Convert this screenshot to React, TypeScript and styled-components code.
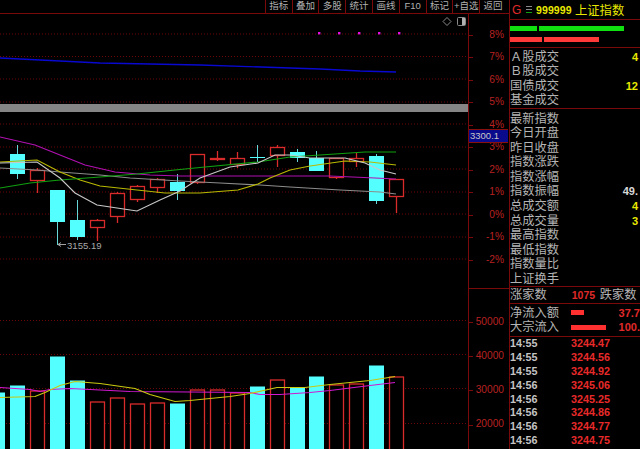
import React from 'react';
import styled, { createGlobalStyle } from 'styled-components';

// DATA
const digits = '"Liberation Sans", "Noto Sans CJK SC", sans-serif';
const red = '#d92b2b';
const cyan = '#54ffff';
const rule = '#7a0a0a';

const toolbarItems = ['指标', '叠加', '多股', '统计', '画线', 'F10', '标记', '+自选', '返回'];
const priceLabels = ['8%', '7%', '6%', '5%', '4%', '3%', '2%', '1%', '0%', '-1%', '-2%'];
const volumeLabels = ['50000', '40000', '30000', '20000'];
const priceGrid = [34, 56.5, 79, 102, 124, 147, 169, 192, 214, 237, 259];
const volumeGrid = [32, 66, 100, 135];

// x, open top, body bottom, wick top, wick bottom, up = red hollow
const candles = [
    { x: 10, top: 154, bottom: 174, hi: 145, lo: 179, up: false },
    { x: 30, top: 170, bottom: 180, hi: 168, lo: 193, up: true },
    { x: 50, top: 190, bottom: 222, hi: 190, lo: 245, up: false },
    { x: 70, top: 220, bottom: 237, hi: 200, lo: 240, up: false },
    { x: 90, top: 220, bottom: 227, hi: 219, lo: 241, up: true },
    { x: 110, top: 193, bottom: 216, hi: 192, lo: 223, up: true },
    { x: 130, top: 186, bottom: 199, hi: 185, lo: 202, up: true },
    { x: 150, top: 179, bottom: 187, hi: 178, lo: 193, up: true },
    { x: 170, top: 182, bottom: 191, hi: 174, lo: 200, up: false },
    { x: 190, top: 154, bottom: 182, hi: 154, lo: 184, up: true },
    { x: 210, top: 158, bottom: 159, hi: 151, lo: 161, up: true },
    { x: 230, top: 158, bottom: 164, hi: 152, lo: 168, up: true },
    { x: 250, top: 157, bottom: 158, hi: 145, lo: 162, up: false },
    { x: 270, top: 147, bottom: 155, hi: 145, lo: 167, up: true },
    { x: 290, top: 152, bottom: 158, hi: 149, lo: 162, up: false },
    { x: 309, top: 158, bottom: 171, hi: 151, lo: 171, up: false },
    { x: 329, top: 158, bottom: 177, hi: 158, lo: 179, up: true },
    { x: 349, top: 158, bottom: 161, hi: 153, lo: 167, up: true },
    { x: 369, top: 156, bottom: 201, hi: 154, lo: 204, up: false },
    { x: 389, top: 179, bottom: 196, hi: 179, lo: 213, up: true },
];

const volumes = [
    { x: -10, top: 393, up: false },
    { x: 10, top: 386, up: false },
    { x: 30, top: 391, up: true },
    { x: 50, top: 357, up: false },
    { x: 70, top: 381, up: false },
    { x: 90, top: 402, up: true },
    { x: 110, top: 398, up: true },
    { x: 130, top: 404, up: true },
    { x: 150, top: 403, up: true },
    { x: 170, top: 404, up: false },
    { x: 190, top: 390, up: true },
    { x: 210, top: 390, up: true },
    { x: 230, top: 393, up: true },
    { x: 250, top: 387, up: false },
    { x: 270, top: 380, up: true },
    { x: 290, top: 388, up: false },
    { x: 309, top: 377, up: false },
    { x: 329, top: 385, up: true },
    { x: 349, top: 384, up: true },
    { x: 369, top: 366, up: false },
    { x: 389, top: 377, up: true },
];

const blueLine = '0,58 40,60 100,63 200,65 320,69 360,71 396,72';
const magentaLine = '0,137 35,145 60,155 85,165 115,172 150,175 180,176 210,176 260,176 330,176 375,178 396,179';
const grayLine = '0,168 37,170 60,172 100,175 130,178 180,181 220,183 260,185 290,187 340,190 380,192 396,194';
const whiteLine = '0,163 37,162 60,178 75,193 97,205 137,211 160,200 180,191 200,178 230,167 258,163 275,155 290,155 310,158 345,158 365,163 380,170 396,174';
const yellowLine = '0,162 37,160 60,172 80,180 100,186 137,190 165,193 200,193 238,190 258,184 270,178 290,170 310,166 345,161 370,162 396,165';
const greenLine = '0,188 30,183 60,180 100,177 137,174 175,170 205,167 258,162 290,157 320,155 365,152 396,152';
const volYellow = '0,109 35,108 45,104 60,97 75,93 100,95 135,100 150,106 175,113 190,112 230,108 250,105 277,99 305,99 330,96 370,92 395,88';
const volMagenta = '0,99 30,101 40,103 50,101 70,100 90,101 130,103 250,104 260,106 280,106 310,104 330,102 370,97 395,94';

const quoteRows = [
    { label: 'Ａ股成交', value: '4' },
    { label: 'Ｂ股成交', value: '' },
    { label: '国债成交', value: '12' },
    { label: '基金成交', value: '' },
];
const indexRows = [
    { label: '最新指数', value: '', tone: '' },
    { label: '今日开盘', value: '', tone: '' },
    { label: '昨日收盘', value: '', tone: '' },
    { label: '指数涨跌', value: '', tone: '' },
    { label: '指数涨幅', value: '', tone: '' },
    { label: '指数振幅', value: '49.', tone: '#d8d8d8' },
    { label: '总成交额', value: '4', tone: '#e8e800' },
    { label: '总成交量', value: '3', tone: '#e8e800' },
    { label: '最高指数', value: '', tone: '' },
    { label: '最低指数', value: '', tone: '' },
    { label: '指数量比', value: '', tone: '' },
    { label: '上证换手', value: '', tone: '' },
];
const flowRows = [
    { label: '净流入额', width: 13, value: '37.7' },
    { label: '大宗流入', width: 35, value: '100.' },
];
const ticks = [
    ['14:55', '3244.47'],
    ['14:55', '3244.56'],
    ['14:55', '3244.92'],
    ['14:56', '3245.06'],
    ['14:56', '3245.25'],
    ['14:56', '3244.86'],
    ['14:56', '3244.77'],
    ['14:56', '3244.75'],
];

// STYLES
const GlobalStyle = createGlobalStyle`
    html, body {
        margin: 0;
        background: #000;
    }
`;

const Terminal = styled.div`
    display: flex;
    width: 640px;
    height: 449px;
    overflow: hidden;
    background: #000;
    font-family: ${digits};
`;

const Workspace = styled.div`
    display: flex;
    flex-direction: column;
    width: 509px;
    flex: none;
`;

const Toolbar = styled.div`
    display: flex;
    justify-content: flex-end;
    height: 13px;
    padding-right: 3px;
    border-bottom: 1px solid ${rule};
`;

const ToolButton = styled.div`
    width: 26.8px;
    border-left: 1px solid ${rule};
    box-sizing: border-box;
    color: #b0b0b0;
    font-size: 9.5px;
    line-height: 12px;
    text-align: center;
    white-space: nowrap;
`;

const ChartRow = styled.div<{ $height: number }>`
    display: flex;
    height: ${({ $height }) => $height}px;
    flex: none;
    position: relative;
`;

const Plot = styled.svg`
    display: block;
    flex: none;
    width: 468px;
    height: 100%;
`;

const PriceAxis = styled.div`
    flex: 1;
    padding-top: 9.5px;
    border-left: 1px solid ${rule};
`;

const AxisLabel = styled.div<{ $gap: number }>`
    position: relative;
    height: ${({ $gap }) => $gap}px;
    line-height: ${({ $gap }) => $gap}px;
    padding-right: 5px;
    color: #b82222;
    font-size: 10.2px;
    text-align: right;

    &::before {
        content: '';
        position: absolute;
        left: 0;
        top: 50%;
        width: 4px;
        height: 1px;
        background: ${rule};
    }
`;

const VolumeAxis = styled(PriceAxis)`
    padding-top: 15.5px;
    border-top: 1px solid ${rule};
`;

const PriceBadge = styled.div`
    position: absolute;
    left: 469px;
    top: 115px;
    width: 38px;
    height: 12px;
    background: #0a0a8c;
    border-top: 1px solid #8a1010;
    border-bottom: 1px solid #8a1010;
    color: #c8c8c8;
    font-size: 9.5px;
    line-height: 12px;
    padding-left: 1px;
`;

const Sidebar = styled.aside`
    display: flex;
    flex-direction: column;
    flex: 1;
    min-width: 0;
    border-left: 1px solid ${rule};
`;

const Header = styled.header`
    display: flex;
    align-items: center;
    height: 19px;
    flex: none;
    padding-left: 2px;
    border-bottom: 1px solid ${rule};
    color: #e8e800;
    font-size: 12.3px;
    white-space: nowrap;
`;

const MarketLetter = styled.span`
    width: 14px;
    color: #e02a2a;
    font-size: 12px;
`;

const Code = styled.span`
    width: 39px;
    margin-left: 4px;
    font-size: 10.5px;
    font-weight: 700;
    letter-spacing: 0.1px;
`;

const Meter = styled.div`
    display: flex;
    flex-direction: column;
    gap: 6px;
    height: 28px;
    flex: none;
    padding-top: 6px;
    box-sizing: border-box;
    border-bottom: 1px solid ${rule};
`;

const MeterRow = styled.div`
    display: flex;
    gap: 2px;
`;

const MeterBar = styled.div<{ $color: string; $width: number }>`
    width: ${({ $width }) => $width}px;
    height: 5px;
    background: ${({ $color }) => $color};
`;

const Section = styled.section<{ $height: number; $inset?: number }>`
    height: ${({ $height }) => $height}px;
    flex: none;
    box-sizing: border-box;
    padding-top: ${({ $inset }) => $inset || 0}px;
    border-bottom: 1px solid ${rule};
`;

const Row = styled.div<{ $height: number }>`
    display: flex;
    justify-content: space-between;
    height: ${({ $height }) => $height}px;
    line-height: ${({ $height }) => $height}px;
    color: #b4b4b4;
    font-size: 12.25px;
    white-space: nowrap;
`;

const RowValue = styled.span<{ $tone?: string }>`
    padding-right: 2px;
    color: ${({ $tone }) => $tone || '#e8e800'};
    font-size: 11px;
    font-weight: 700;
`;

const BreadthCount = styled.span`
    width: 28px;
    margin-left: 25px;
    color: #e02a2a;
    font-size: 10.5px;
    font-weight: 700;
`;

const BreadthRow = styled(Row)`
    justify-content: flex-start;
`;

const FlowBar = styled.div<{ $width: number }>`
    width: ${({ $width }) => $width}px;
    height: 5px;
    background: #ff3030;
    margin-left: 12px;
    align-self: center;
`;

const FlowValue = styled.span`
    margin-left: auto;
    color: #e02a2a;
    font-size: 11px;
    font-weight: 700;
`;

const TickList = styled.div`
    display: flex;
    flex-direction: column;
`;

const TickRow = styled.div`
    display: grid;
    grid-template-columns: 61px 1fr;
    height: 13.9px;
    line-height: 13.9px;
    font-size: 10.8px;
    font-weight: 700;
`;

const TickTime = styled.span`
    color: #c4c4c4;
`;

const TickPrice = styled.span`
    color: #e82a2a;
`;

// COMPONENTS
const Grid = ({ ys }: { ys: number[] }) => (
    <g stroke="#6a0606" strokeDasharray="1 2">
        {ys.map((y) => (
            <line key={y} x1="0" x2="468" y1={y} y2={y} />
        ))}
    </g>
);

const Trend = ({ points, color, width = 1 }: { points: string; color: string; width?: number }) => (
    <polyline points={points} fill="none" stroke={color} strokeWidth={width} />
);

const PricePanel = () => (
    <Plot viewBox="0 14 468 274">
        <Grid ys={priceGrid} />
        <rect x="0" y="104" width="468" height="8" fill="#858585" />
        {[319, 339, 359, 379, 399].map((x) => (
            <rect key={x} x={x - 1} y="32" width="2.4" height="2.4" fill="#e010e0" />
        ))}
        <path d="M447 17.5 L451 21.5 L447 25.5 L443 21.5 Z" fill="none" stroke="#8a8a8a" />
        <rect x="457.5" y="17.5" width="8" height="8" rx="1" fill="none" stroke="#8a8a8a" />
        <rect x="462" y="18" width="3" height="7" fill="#b0b0b0" />
        <Trend points={blueLine} color="#0808d0" width={1.4} />
        {candles.map((c) => (
            <g key={c.x} stroke={c.up ? red : '#66d8d8'} strokeWidth={c.up ? 1.3 : 1}>
                <line x1={c.x + 7.5} x2={c.x + 7.5} y1={c.hi} y2={c.lo} />
                {c.up ? (
                    <rect x={c.x + 0.5} y={c.top + 0.5} width="14" height={c.bottom - c.top} fill="#000" />
                ) : (
                    <rect x={c.x} y={c.top} width="15" height={c.bottom - c.top} fill={cyan} stroke="none" />
                )}
            </g>
        ))}
        <Trend points={magentaLine} color="#b010b0" width={1.2} />
        <Trend points={grayLine} color="#8c8c8c" width={1.2} />
        <Trend points={yellowLine} color="#b8b800" width={1.2} />
        <Trend points={greenLine} color="#10a010" width={1.2} />
        <Trend points={whiteLine} color="#c8c8c8" width={1.1} />
        <path d="M58 244.5 H66 M58 244.5 L61 242.5 M58 244.5 L61 246.5" stroke="#a0a0a0" fill="none" />
        <text x="67" y="249" fill="#a8a8a8" fontFamily={digits} fontSize="9.6">
            3155.19
        </text>
    </Plot>
);

const VolumePanel = () => (
    <Plot viewBox="0 0 468 160">
        <Grid ys={volumeGrid} />
        {volumes.map((v) =>
            v.up ? (
                <rect key={v.x} x={v.x + 0.5} y={v.top - 289 + 0.5} width="14" height="200" fill="#000" stroke={red} strokeWidth="1.3" />
            ) : (
                <rect key={v.x} x={v.x} y={v.top - 289} width="15" height="200" fill={cyan} />
            ),
        )}
        <Trend points={volMagenta} color="#d018d0" width={1.2} />
        <Trend points={volYellow} color="#c8c810" width={1.2} />
    </Plot>
);

const App = (): JSX.Element => (
    <Terminal>
        <GlobalStyle />
        <Workspace>
            <Toolbar>
                {toolbarItems.map((item) => (
                    <ToolButton key={item}>{item}</ToolButton>
                ))}
            </Toolbar>
            <ChartRow $height={274}>
                <PricePanel />
                <PriceAxis>
                    {priceLabels.map((label) => (
                        <AxisLabel key={label} $gap={22.5}>
                            {label}
                        </AxisLabel>
                    ))}
                </PriceAxis>
                <PriceBadge>3300.1</PriceBadge>
            </ChartRow>
            <ChartRow $height={161}>
                <VolumePanel />
                <VolumeAxis>
                    {volumeLabels.map((label) => (
                        <AxisLabel key={label} $gap={34.3}>
                            {label}
                        </AxisLabel>
                    ))}
                </VolumeAxis>
            </ChartRow>
        </Workspace>
        <Sidebar>
            <Header>
                <MarketLetter>G</MarketLetter>
                <svg width="6" height="7" viewBox="0 0 6 7">
                    <path d="M0 .5H6M0 3.5H6" stroke="#8a8a8a" />
                    <path d="M0 6.5H6" stroke="#10a010" />
                </svg>
                <Code>999999</Code>
                上证指数
            </Header>
            <Meter>
                <MeterRow>
                    <MeterBar $color="#10e010" $width={27} />
                    <MeterBar $color="#10e010" $width={85} />
                </MeterRow>
                <MeterRow>
                    <MeterBar $color="#ff3838" $width={32} />
                    <MeterBar $color="#ff3838" $width={55} />
                </MeterRow>
            </Meter>
            <Section $height={61} $inset={1.5}>
                {quoteRows.map((row) => (
                    <Row key={row.label} $height={14.6}>
                        {row.label}
                        <RowValue>{row.value}</RowValue>
                    </Row>
                ))}
            </Section>
            <Section $height={178} $inset={2.5}>
                {indexRows.map((row) => (
                    <Row key={row.label} $height={14.6}>
                        {row.label}
                        <RowValue $tone={row.tone}>{row.value}</RowValue>
                    </Row>
                ))}
            </Section>
            <Section $height={17} $inset={0.5}>
                <BreadthRow $height={15.5}>
                    涨家数
                    <BreadthCount>1075</BreadthCount>
                    跌家数
                </BreadthRow>
            </Section>
            <Section $height={33} $inset={1.5}>
                {flowRows.map((row) => (
                    <BreadthRow key={row.label} $height={14.7}>
                        {row.label}
                        <FlowBar $width={row.width} />
                        <FlowValue>{row.value}</FlowValue>
                    </BreadthRow>
                ))}
            </Section>
            <TickList>
                {ticks.map(([time, price], index) => (
                    <TickRow key={index}>
                        <TickTime>{time}</TickTime>
                        <TickPrice>{price}</TickPrice>
                    </TickRow>
                ))}
            </TickList>
        </Sidebar>
    </Terminal>
);

export default App;
